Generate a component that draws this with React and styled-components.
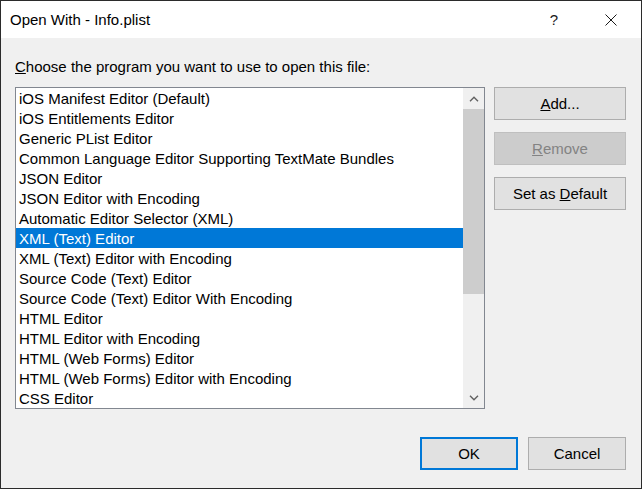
import React from 'react';
import styled, { createGlobalStyle } from 'styled-components';

const programs = [
  'iOS Manifest Editor (Default)',
  'iOS Entitlements Editor',
  'Generic PList Editor',
  'Common Language Editor Supporting TextMate Bundles',
  'JSON Editor',
  'JSON Editor with Encoding',
  'Automatic Editor Selector (XML)',
  'XML (Text) Editor',
  'XML (Text) Editor with Encoding',
  'Source Code (Text) Editor',
  'Source Code (Text) Editor With Encoding',
  'HTML Editor',
  'HTML Editor with Encoding',
  'HTML (Web Forms) Editor',
  'HTML (Web Forms) Editor with Encoding',
  'CSS Editor',
];

const selectedIndex = 7;

const GlobalStyle = createGlobalStyle`
  html, body {
    margin: 0;
    padding: 0;
    background: #ffffff;
  }
  body {
    font-family: "Liberation Sans", Arial, sans-serif;
    font-size: 15px;
    color: #000000;
  }
  * { box-sizing: border-box; }
`;

const Window = styled.div`
  width: 642px;
  height: 489px;
  border: 1px solid #2b2b2b;
  background: #f0f0f0;
  display: flex;
  flex-direction: column;
`;

const TitleBar = styled.div`
  height: 37px;
  flex: none;
  background: #ffffff;
  display: flex;
  align-items: center;
  padding: 0 7px 0 9px;
`;

const Title = styled.span`
  flex: 1;
  line-height: 20px;
`;

const Controls = styled.div`
  display: flex;
  gap: 11px;
  height: 100%;
`;

const CaptionButton = styled.div`
  width: 46px;
  display: flex;
  align-items: center;
  justify-content: center;
  font-size: 15px;
  color: #1a1a1a;
`;

const Body = styled.div`
  flex: 1;
  display: flex;
  flex-direction: column;
  padding: 19px 15px 18px 14px;
`;

const Prompt = styled.div`
  line-height: 20px;
  margin-bottom: 10px;
`;

const Main = styled.div`
  display: flex;
  gap: 9px;
  align-items: flex-start;
`;

const ListBox = styled.div`
  width: 470px;
  height: 322px;
  border: 1px solid #828790;
  background: #ffffff;
  display: flex;
`;

const Items = styled.div`
  flex: 1;
  overflow: hidden;
`;

const Item = styled.div`
  height: 20px;
  line-height: 22px;
  padding-left: 3px;
  white-space: nowrap;
  overflow: hidden;
  background: ${p => (p.$selected ? '#0078d7' : 'transparent')};
  color: ${p => (p.$selected ? '#ffffff' : '#000000')};
`;

const ScrollBar = styled.div`
  width: 21px;
  background: #f0f0f0;
  display: flex;
  flex-direction: column;
`;

const ArrowBox = styled.div`
  height: 21px;
  flex: none;
  display: flex;
  align-items: center;
  justify-content: center;
`;

const Track = styled.div`
  flex: 1;
`;

const Thumb = styled.div`
  height: 185px;
  background: #cdcdcd;
`;

const ButtonColumn = styled.div`
  width: 132px;
  display: flex;
  flex-direction: column;
  gap: 12px;
`;

const Button = styled.div`
  height: 33px;
  width: ${p => p.$width || '100%'};
  display: flex;
  align-items: center;
  justify-content: center;
  border: ${p => (p.$primary ? '2px solid #0078d7' : `1px solid ${p.$disabled ? '#bfbfbf' : '#adadad'}`)};
  background: ${p => (p.$disabled ? '#cccccc' : '#e1e1e1')};
  color: ${p => (p.$disabled ? '#838383' : '#000000')};
  line-height: 20px;
`;

const ButtonLabel = styled.span`
  white-space: pre;
`;

const Footer = styled.div`
  margin-top: auto;
  display: flex;
  justify-content: flex-end;
  gap: 10px;
`;

const Chevron = ({ up }) => (
  <svg width="10" height="6" viewBox="0 0 10 6">
    <polyline
      points={up ? '1,5.2 5,1.2 9,5.2' : '1,0.8 5,4.8 9,0.8'}
      fill="none"
      stroke="#606060"
      strokeWidth="1.4"
    />
  </svg>
);

const CloseIcon = () => (
  <svg width="12" height="12" viewBox="0 0 12 12">
    <path d="M0.5 0.5 L11.5 11.5 M11.5 0.5 L0.5 11.5" stroke="#1a1a1a" strokeWidth="1" />
  </svg>
);

export default function App() {
  return (
    <>
      <GlobalStyle />
      <Window>
        <TitleBar>
          <Title>Open With - Info.plist</Title>
          <Controls>
            <CaptionButton>?</CaptionButton>
            <CaptionButton><CloseIcon /></CaptionButton>
          </Controls>
        </TitleBar>
        <Body>
          <Prompt><u>C</u>hoose the program you want to use to open this file:</Prompt>
          <Main>
            <ListBox>
              <Items>
                {programs.map((name, i) => (
                  <Item key={name} $selected={i === selectedIndex}>{name}</Item>
                ))}
              </Items>
              <ScrollBar>
                <ArrowBox><Chevron up /></ArrowBox>
                <Track><Thumb /></Track>
                <ArrowBox><Chevron /></ArrowBox>
              </ScrollBar>
            </ListBox>
            <ButtonColumn>
              <Button><ButtonLabel><u>A</u>dd...</ButtonLabel></Button>
              <Button $disabled><ButtonLabel><u>R</u>emove</ButtonLabel></Button>
              <Button><ButtonLabel>Set as <u>D</u>efault</ButtonLabel></Button>
            </ButtonColumn>
          </Main>
          <Footer>
            <Button $primary $width="98px"><ButtonLabel>OK</ButtonLabel></Button>
            <Button $width="98px"><ButtonLabel>Cancel</ButtonLabel></Button>
          </Footer>
        </Body>
      </Window>
    </>
  );
}
